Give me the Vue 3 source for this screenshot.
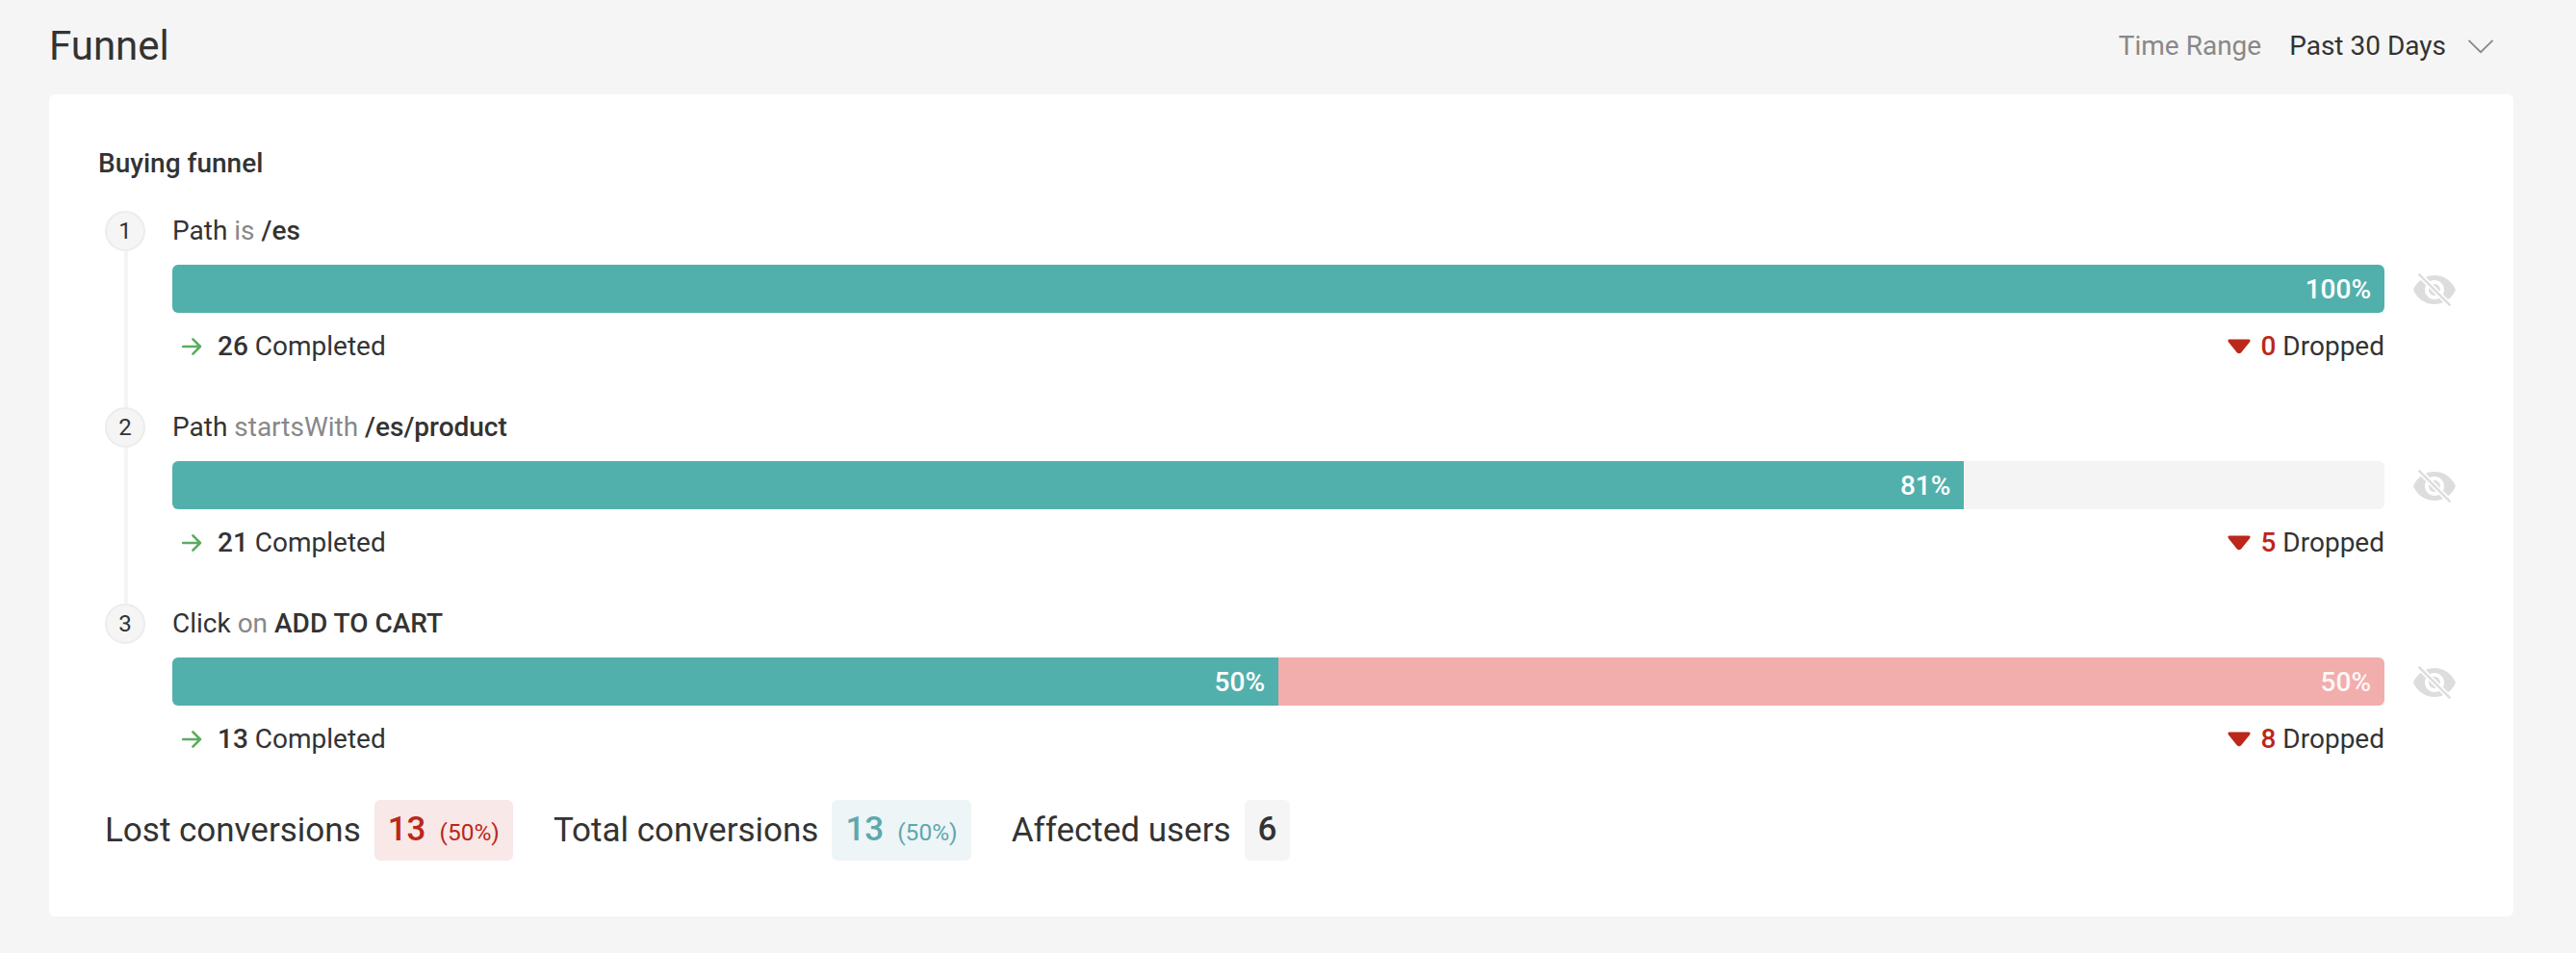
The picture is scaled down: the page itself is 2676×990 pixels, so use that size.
<script setup>
const steps = [
  { id: 1, subject: 'Path', verb: 'is', target: '/es', bars: [{ kind: 'done', pct: 100 }], completed: 26, dropped: 0 },
  { id: 2, subject: 'Path', verb: 'startsWith', target: '/es/product', bars: [{ kind: 'done', pct: 81 }], completed: 21, dropped: 5 },
  { id: 3, subject: 'Click', verb: 'on', target: 'ADD TO CART', bars: [{ kind: 'done', pct: 50 }, { kind: 'lost', pct: 50 }], completed: 13, dropped: 8 },
]
const stats = [
  { label: 'Lost conversions', value: 13, share: '(50%)', tone: 'red' },
  { label: 'Total conversions', value: 13, share: '(50%)', tone: 'teal' },
  { label: 'Affected users', value: 6, share: '', tone: 'gray' },
]
</script>

<template>
  <main class="page">
    <header class="topbar">
      <h1>Funnel</h1>
      <div class="range">
        <span class="muted">Time Range</span>
        <span class="range-value">Past 30 Days</span>
        <svg class="chevron" width="28" height="16" viewBox="0 0 28 16">
          <path d="M1.5 1.8 14 14.2 26.5 1.8" fill="none" stroke="#888" stroke-width="1.8" />
        </svg>
      </div>
    </header>

    <section class="card">
      <h2>Buying funnel</h2>
      <ol class="steps">
        <li v-for="step in steps" :key="step.id" class="step">
          <div class="rail">
            <span class="number">{{ step.id }}</span>
            <span v-if="step.id < steps.length" class="line"></span>
          </div>
          <div class="body">
            <div class="rule">{{ step.subject }} <span class="muted">{{ step.verb }}</span> <b>{{ step.target }}</b></div>
            <div class="track">
              <div v-for="bar in step.bars" :key="bar.kind" class="bar" :class="bar.kind" :style="{ width: bar.pct + '%' }">
                <span>{{ bar.pct }}%</span>
              </div>
            </div>
            <div class="result">
              <div class="completed">
                <svg width="22" height="20" viewBox="0 0 22 20">
                  <path d="M2.2 10H20M12.4 2.4 20 10l-7.6 7.6" fill="none" stroke="#5aad5f" stroke-width="2.6" stroke-linecap="round" stroke-linejoin="round" />
                </svg>
                <span><b>{{ step.completed }}</b> Completed</span>
              </div>
              <div class="dropped">
                <svg width="24" height="16" viewBox="0 0 24 16">
                  <path d="M1.8 .4H22.2Q24.6 .8 22.9 3.4L14.2 14.2Q12 16.2 9.8 14.2L1.1 3.4Q-.6 .8 1.8 .4Z" fill="#bb271a" />
                </svg>
                <span><b>{{ step.dropped }}</b> Dropped</span>
              </div>
            </div>
          </div>
          <svg class="eye" width="48" height="48" viewBox="0 0 24 24">
            <path fill="#ddd" d="M12 4.5C7 4.5 2.73 7.61 1 12c1.73 4.39 6 7.5 11 7.5s9.27-3.11 11-7.5c-1.73-4.39-6-7.5-11-7.5zM12 17c-2.76 0-5-2.24-5-5s2.24-5 5-5 5 2.24 5 5-2.24 5-5 5zm0-8c-1.66 0-3 1.34-3 3s1.34 3 3 3 3-1.34 3-3-1.34-3-3-3z" />
            <path d="M3 3 21 21" stroke="#fff" stroke-width="2.9" />
            <path d="M3.8 3.8 20.2 20.2" stroke="#ddd" stroke-width="1.3" />
          </svg>
        </li>
      </ol>

      <div class="stats">
        <div v-for="stat in stats" :key="stat.label" class="stat">
          <span>{{ stat.label }}</span>
          <span class="badge" :class="stat.tone"><b>{{ stat.value }}</b><small v-if="stat.share">{{ stat.share }}</small></span>
        </div>
      </div>
    </section>
  </main>
</template>

<style>
body { margin: 0; background: #f5f5f5; }
</style>

<style scoped>
* { box-sizing: border-box; }
.page {
  height: 990px;
  padding: 0 65px 0 51px;
  background: #f5f5f5;
  color: #333;
  font: 400 28px/40px Roboto, sans-serif;
}
h1, h2, ol { margin: 0; padding: 0; font-weight: 400; }
b { font-weight: 500; }
.muted { color: #888; }
.topbar { height: 98px; display: flex; justify-content: space-between; align-items: flex-start; padding-right: 20px; }
h1 { font-size: 42px; line-height: 56px; padding-top: 20px; }
.range { display: flex; align-items: center; padding-top: 28px; }
.range-value { margin: 0 22px 0 29px; }
.card { height: 854px; padding: 52px 58px 0 51px; background: #fff; border-radius: 6px; }
h2 { font-size: 28px; line-height: 40px; font-weight: 500; }
.steps { list-style: none; margin-top: 29px; padding-left: 7px; }
.step { display: flex; height: 204px; }
.rail { width: 70px; display: flex; flex-direction: column; }
.number {
  width: 42px;
  height: 42px;
  flex: none;
  border: 2px solid #ececec;
  border-radius: 50%;
  background: #f5f5f5;
  font-size: 24px;
  line-height: 38px;
  text-align: center;
}
.line { flex: 1; width: 4px; margin-left: 20px; background: #f5f5f5; }
.body { flex: 1; }
.rule { padding-top: 1px; }
.track { display: flex; height: 50px; margin-top: 15px; border-radius: 6px; overflow: hidden; background: #f4f4f4; }
.bar { display: flex; align-items: center; justify-content: flex-end; padding: 2px 14px 0 0; color: #fff; font-weight: 500; }
.done { background: #52b0ac; }
.lost { background: #f2adad; }
.lost span { opacity: .9; }
.result { display: flex; justify-content: space-between; margin-top: 15px; }
.completed, .dropped { display: flex; align-items: center; }
.completed { padding-left: 9px; gap: 16px; }
.dropped { gap: 10px; }
.dropped b { color: #bb271a; }
.eye { margin: 58px 0 0 28px; flex: none; }
.stats { display: flex; gap: 42px; padding-left: 7px; font-size: 35px; }
.stat { display: flex; align-items: center; gap: 14px; }
.badge { display: flex; align-items: baseline; gap: 14px; height: 63px; line-height: 61px; padding: 0 14px; border-radius: 6px; }
.badge small { font-size: 24.5px; }
.red { background: #f8e8e8; color: #bb271a; }
.teal { background: #edf5f7; color: #5ea8ae; }
.gray { background: #f5f5f5; }
</style>
